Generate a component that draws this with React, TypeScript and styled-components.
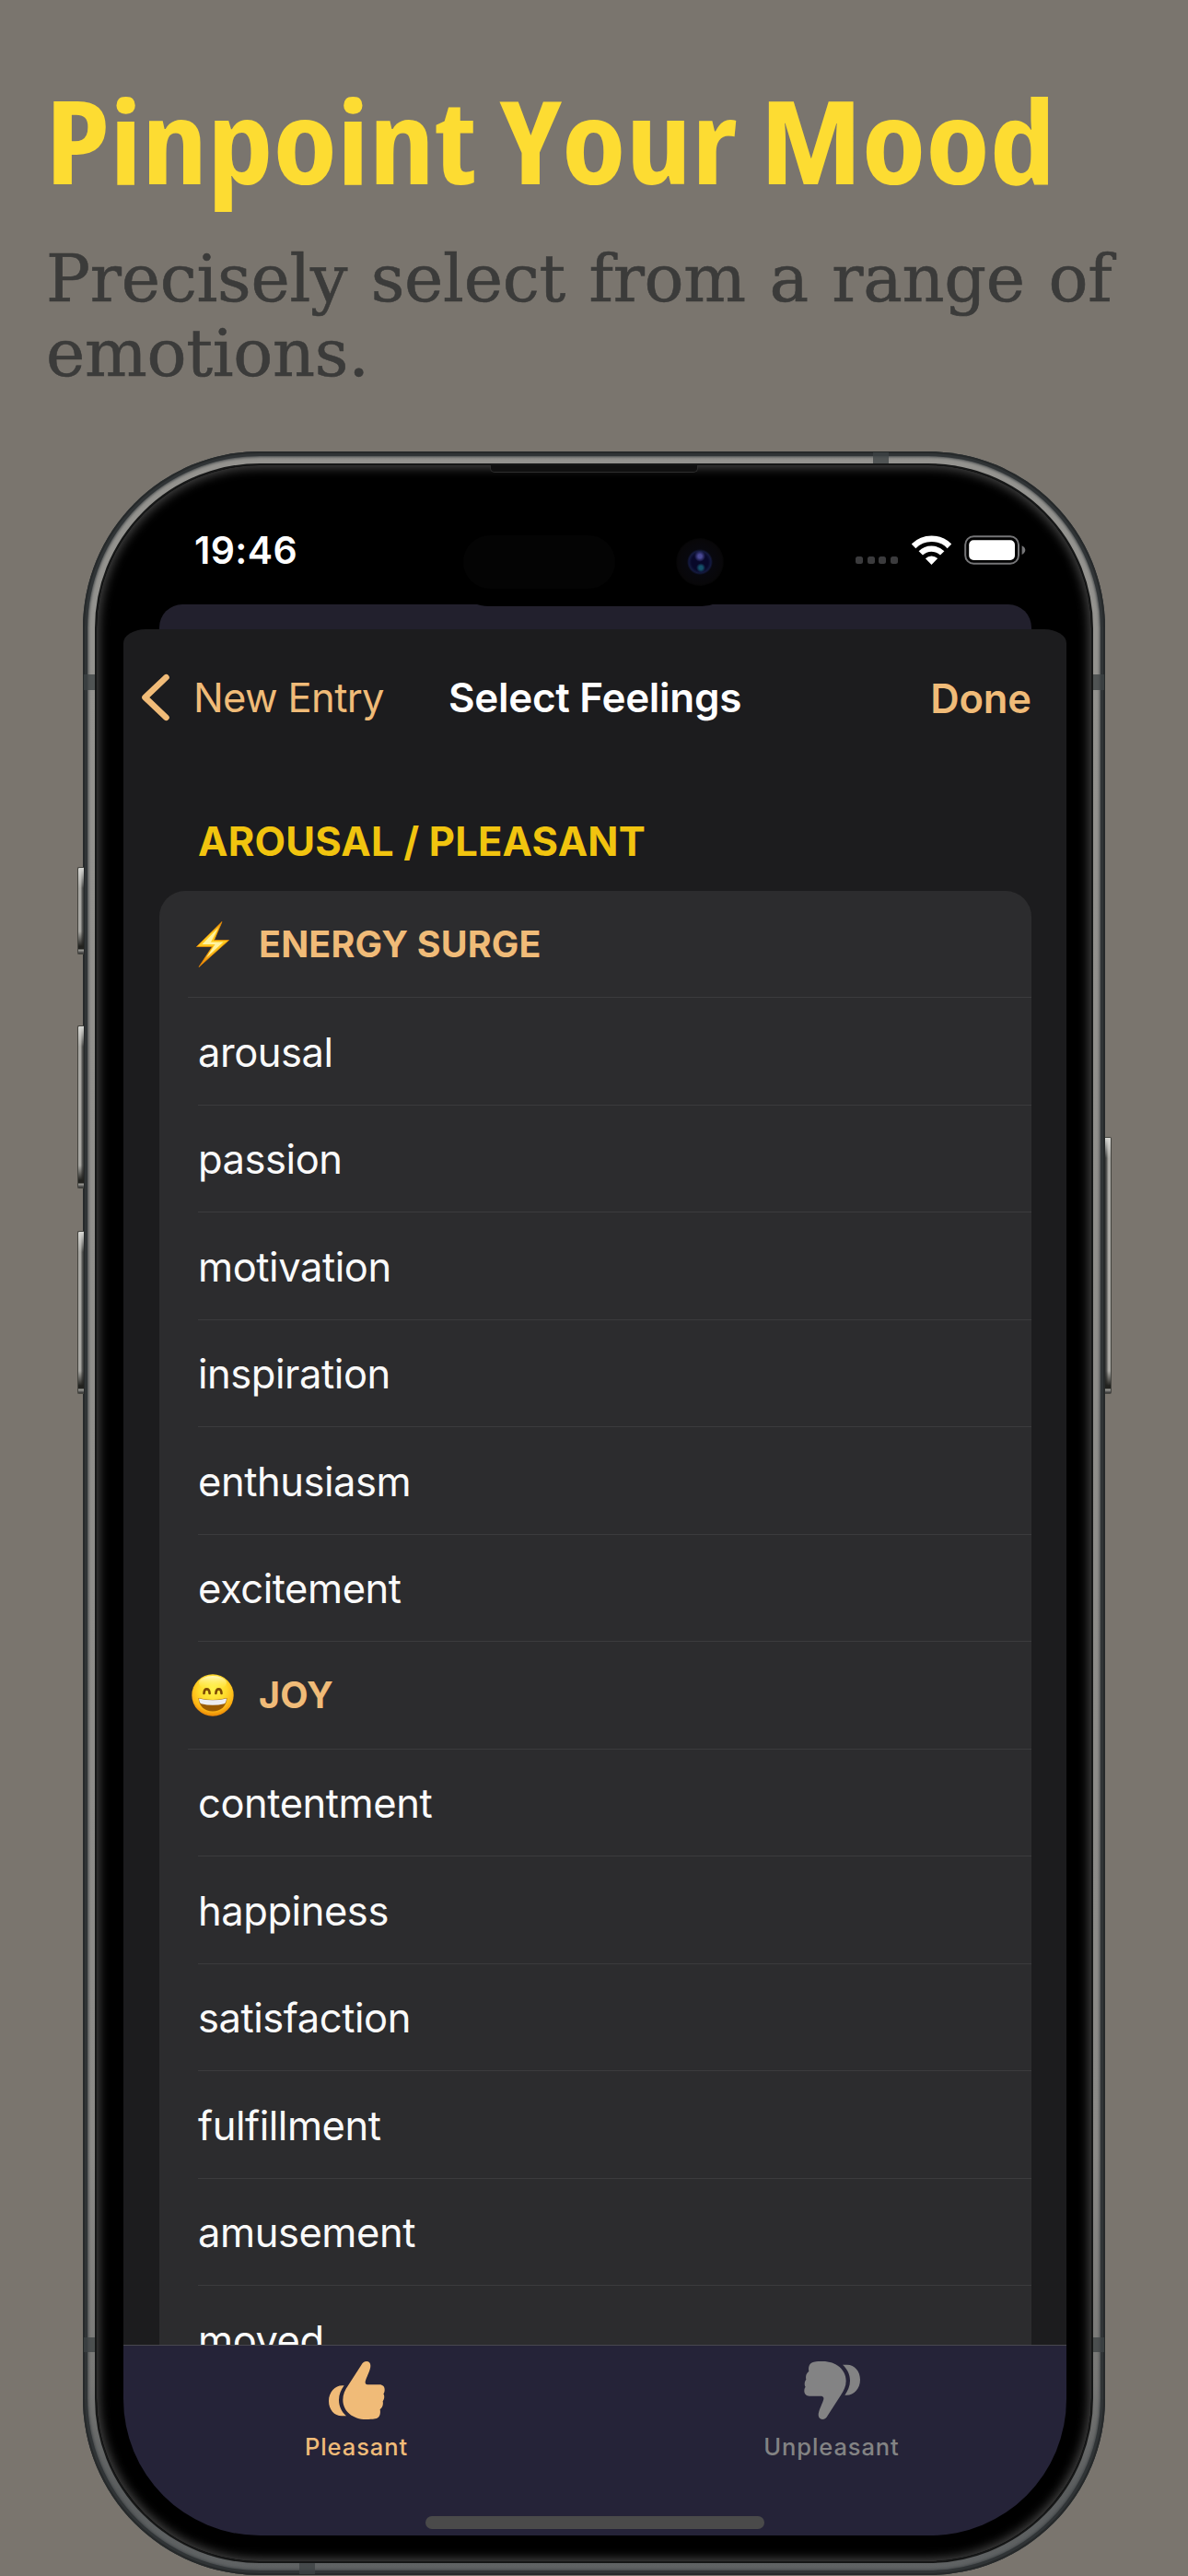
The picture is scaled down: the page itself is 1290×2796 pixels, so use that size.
import React from "react";
import styled, { createGlobalStyle } from "styled-components";

const ACCENT = "#f0bb78";
const UI_FONT = `Inter, "Liberation Sans", sans-serif`;

const GlobalStyle = createGlobalStyle`
  *, *::before, *::after { box-sizing: border-box; }
  body { margin: 0; background: #7a756e; }
`;

const Page = styled.main`
  display: flex;
  flex-direction: column;
  width: 1290px;
  height: 2796px;
  overflow: hidden;
  background: #7a756e;
`;

const Intro = styled.header`
  flex: none;
  height: 490px;
  padding: 86px 50px 0 50px;
`;

const Title = styled.h1`
  margin: 0;
  width: max-content;
  height: 130px;
  color: #fddc32;
  font: 700 126px/130px "Open Sans", "Noto Sans", sans-serif;
  font-stretch: 75%;
  white-space: nowrap;
  transform: scaleX(1.13);
  transform-origin: 5px 50%;
`;

const Subtitle = styled.p`
  margin: 47px 0 0;
  color: #3b3b3a;
  font: 400 71.5px/80.5px "DejaVu Serif", serif;
  letter-spacing: -0.3px;
  word-spacing: 3.2px;
  -webkit-text-stroke: 0.6px #3b3b3a;
`;

/* ---------- device ---------- */

const Device = styled.div`
  position: relative;
  flex: none;
  width: 1110px;
  height: 2305px;
  margin-left: 90px;
  padding: 13px;
  border-radius: 192px;
  background: linear-gradient(180deg, #94938f 0%, #8b8a87 80%, #777775 91%, #5a5d5e 96%, #606364 100%);
  box-shadow:
    inset 0 0 0 2px #26292a,
    inset 0 0 0 5px #303436,
    inset 0 0 3px 6px #424648;
`;

const Face = styled.div`
  height: 100%;
  padding: 28px 27px 28px 29px;
  border: 2px solid #161717;
  border-radius: 179px;
  background: #000;
  box-shadow: inset 0 0 11px 3px #444;
`;

const SideButton = styled.span<{ $side: "left" | "right"; $top: number; $height: number }>`
  position: absolute;
  ${(p) => (p.$side === "left" ? "left: -6px;" : "right: -7px;")}
  top: ${(p) => p.$top}px;
  width: 7px;
  height: ${(p) => p.$height}px;
  border: 1px solid #44443f;
  border-${(p) => (p.$side === "left" ? "right" : "left")}: 0;
  border-radius: ${(p) => (p.$side === "left" ? "2px 0 0 2px" : "0 2px 2px 0")};
  background:
    linear-gradient(180deg, #d8d8d4 0, transparent 22px, transparent calc(100% - 24px), #22221f calc(100% - 8px), #22221f calc(100% - 5px), #a0a09b calc(100% - 4px), #333 100%),
    linear-gradient(${(p) => (p.$side === "left" ? "90deg" : "270deg")}, #a9a8a3 0 40%, #3d3e3d 85%);
`;

const Antenna = styled.span<{ $x: number; $y: number; $w: number; $h: number }>`
  position: absolute;
  left: ${(p) => p.$x}px;
  top: ${(p) => p.$y}px;
  width: ${(p) => p.$w}px;
  height: ${(p) => p.$h}px;
  background: rgba(62, 66, 68, 0.78);
`;

const Earpiece = styled.span`
  position: absolute;
  left: 442px;
  top: 15px;
  width: 226px;
  height: 8px;
  border: 1px solid #2d2d2d;
  border-top: 0;
  border-radius: 0 0 5px 5px;
  background: #101010;
`;

const Screen = styled.div`
  position: relative;
  display: flex;
  flex-direction: column;
  width: 1024px;
  height: 2219px;
  overflow: hidden;
  border-radius: 148px;
  background: #000;
`;

const Island = styled.div`
  position: absolute;
  z-index: 1;
  left: 349px;
  top: 29px;
  width: 326px;
  height: 96px;
  padding: 19px 23px 0 20px;
  display: flex;
  justify-content: space-between;
  border-radius: 48px;
  background: #000;
`;

const Sensor = styled.span`
  width: 165px;
  height: 58px;
  border-radius: 29px;
  background: #040404;
`;

const Lens = styled.span`
  width: 52px;
  height: 52px;
  margin-top: 3px;
  border-radius: 50%;
  background:
    radial-gradient(circle at 50% 38%, #4a4a96 0 2px, transparent 6px),
    radial-gradient(circle at 52% 62%, #14516a 0 2px, transparent 5px),
    radial-gradient(circle at 50% 50%, #08082a 0 9px, #141a3f 12px, #08080e 14px, #080709 24px, #040404 26px);
`;

const StatusBar = styled.div`
  display: flex;
  flex: none;
  align-items: center;
  height: 123px;
  padding: 4px 44px 0 77px;
`;

const Clock = styled.span`
  margin-right: auto;
  color: #fff;
  font: 600 41px/50px ${UI_FONT};
  letter-spacing: 0.4px;
`;

const SignalDots = styled.span`
  display: flex;
  gap: 4.4px;
  margin: 22px 15px 0 0;
`;

const Dot = styled.i`
  width: 8px;
  height: 8px;
  border-radius: 2.5px;
  background: #3b3b3d;
`;

const StatusIcon = styled.svg`
  display: block;
  flex: none;
`;

const WifiIcon = styled(StatusIcon)`
  margin-right: 14.5px;
`;

const BackSheet = styled.div`
  flex: none;
  height: 27px;
  margin: 0 38.5px;
  border-radius: 25px 25px 0 0;
  background: #22202d;
`;

const Sheet = styled.section`
  display: flex;
  flex: 1;
  flex-direction: column;
  min-height: 0;
  border-radius: 24px 24px 0 0 / 15px 15px 0 0;
  background: #1c1c1e;
`;

const NavBar = styled.nav`
  display: grid;
  flex: none;
  grid-template-columns: 300px 1fr 280px;
  align-items: center;
  height: 149px;
  padding: 0 38px 2px 18px;
`;

const BackButton = styled.a`
  display: flex;
  align-items: center;
  gap: 26px;
  color: ${ACCENT};
  font: 400 43.5px/52px ${UI_FONT};
  letter-spacing: -0.65px;
  white-space: nowrap;
`;

const NavTitle = styled.h2`
  margin: 0;
  color: #fff;
  font: 600 44px/52px ${UI_FONT};
  letter-spacing: -0.3px;
  text-align: center;
  white-space: nowrap;
`;

const DoneButton = styled.a`
  padding-top: 2px;
  color: ${ACCENT};
  font: 600 43.5px/52px ${UI_FONT};
  letter-spacing: -0.1px;
  text-align: right;
`;

const SectionTitle = styled.h3`
  display: flex;
  flex: none;
  align-items: center;
  height: 135px;
  margin: 0;
  padding: 27px 0 0 81px;
  color: #f1c40f;
  font: 700 43.5px/52px ${UI_FONT};
  letter-spacing: 0.2px;
`;

const ListCard = styled.div`
  flex: 1;
  min-height: 0;
  margin: 0 38.5px;
  overflow: hidden;
  border-radius: 28px 28px 0 0;
  background: #2c2c2e;
`;

const GroupRow = styled.div`
  height: 116.5px;
  padding-left: 31px;
  &:first-child { height: 116px; }
`;

const GroupLabel = styled.div`
  display: flex;
  align-items: center;
  height: 100%;
  border-bottom: 1px solid #3b3b3d;
  color: ${ACCENT};
  font: 700 39.4px/48px ${UI_FONT};
  letter-spacing: 0.2px;
`;

const EmojiSlot = styled.span`
  display: flex;
  justify-content: center;
  width: 55px;
  margin-right: 22.5px;
`;

const FeelingRow = styled.div`
  height: 116.5px;
  padding-left: 42.5px;
`;

const FeelingLabel = styled.div`
  display: flex;
  align-items: center;
  height: 100%;
  padding-top: 2px;
  border-bottom: 1px solid #3b3b3d;
  color: #fafafa;
  font: 400 43.5px/52px ${UI_FONT};
  letter-spacing: -0.45px;
`;

const TabBar = styled.footer`
  display: flex;
  flex: none;
  flex-direction: column;
  align-items: center;
  height: 207px;
  border-top: 1px solid #48474f;
  background: #252338;
`;

const Tabs = styled.div`
  display: flex;
  flex: none;
  justify-content: center;
  width: 1024px;
  height: 185px;
  padding-right: 2px;
`;

const Tab = styled.a<{ $active?: boolean }>`
  display: flex;
  flex: 0 0 516px;
  flex-direction: column;
  align-items: center;
  padding-top: 17px;
  color: ${(p) => (p.$active ? ACCENT : "#838384")};
  font: 500 25.5px/32px ${UI_FONT};
  letter-spacing: 0.9px;
`;

const TabLabel = styled.span`
  margin-top: 14px;
`;

const ThumbSvg = styled.svg<{ $down?: boolean }>`
  display: block;
  fill: currentColor;
  transform: ${(p) => (p.$down ? "rotate(180deg)" : "none")};
`;

const HomeIndicator = styled.span`
  width: 368px;
  height: 14px;
  border-radius: 7px;
  background: #4a4a4a;
`;

/* ---------- drawings ---------- */

const Wifi = () => (
  <WifiIcon width="43" height="32" viewBox="0 0 43 32" fill="none" stroke="#fff">
    <path d="M2 11.8a27.5 27.5 0 0 1 39 0" strokeWidth="6.6" />
    <path d="M9.8 19.4a16.6 16.6 0 0 1 23.4 0" strokeWidth="6.2" />
    <path d="M21.5 32l-6.6-6.8a9.4 9.4 0 0 1 13.2 0z" fill="#fff" stroke="none" />
  </WifiIcon>
);

const Battery = () => (
  <StatusIcon width="67" height="32" viewBox="0 0 67 32">
    <rect x="1.2" y="1.2" width="57.8" height="29.6" rx="9" fill="none" stroke="#757577" strokeWidth="2" />
    <rect x="5.2" y="5.2" width="49.8" height="21.8" rx="5" fill="#fff" />
    <path d="M62.6 11.2c2.4 1 3.7 2.8 3.7 4.9s-1.3 3.9-3.7 4.9z" fill="#757577" />
  </StatusIcon>
);

const Chevron = () => (
  <svg width="32" height="52" viewBox="0 0 32 52" fill="none">
    <path
      d="M28.5 4.2L5.5 26 28.5 47.8"
      stroke={ACCENT}
      strokeWidth="6.6"
      strokeLinecap="round"
      strokeLinejoin="round"
    />
  </svg>
);

const Thumb = ({ down }: { down?: boolean }) => (
  <ThumbSvg $down={down} width="61" height="63" viewBox="48 39 183 189">
    <path d="M154 51C158 43 164 39 171 39C179 39 184 45 184 53C184 66 174 84 168 101C165 110 168 115 177 115H213C224 115 230 122 230 131C230 137 229 141 226 145C230 150 230 162 224 169C226 178 224 190 215 195C218 211 213 224 199 226C189 228 180 228 170 228C126 228 94 201 94 164C94 147 101 132 111 118Z" />
    <path d="M98 118C72 114 48 137 48 168C48 197 67 218 92 217H105C90 203 81 186 81 165C81 147 88 132 98 118Z" />
  </ThumbSvg>
);

const Bolt = () => (
  <svg width="36" height="50" viewBox="0 0 36 50">
    <defs>
      <linearGradient id="bolt" x1="0" y1="0" x2="0" y2="1">
        <stop offset="0" stopColor="#f59a0c" />
        <stop offset="0.25" stopColor="#ffd021" />
        <stop offset="0.65" stopColor="#ffc31a" />
        <stop offset="1" stopColor="#e87a05" />
      </linearGradient>
    </defs>
    <path
      d="M28 0.5L0.5 27.5H17.5L3 49.5L35.5 20.5H19.5Z"
      fill="url(#bolt)"
      stroke="#e88b08"
      strokeWidth="0.8"
    />
    <path d="M24 7L6.5 25H20.5L11 39.5L29.5 22.5H16Z" fill="#fff3a0" />
  </svg>
);

const Grin = () => (
  <svg width="46" height="46" viewBox="0 0 46 46">
    <defs>
      <radialGradient id="face" cx="0.5" cy="0.36" r="0.64">
        <stop offset="0" stopColor="#fff24a" />
        <stop offset="0.5" stopColor="#ffdc2c" />
        <stop offset="0.82" stopColor="#fdb515" />
        <stop offset="1" stopColor="#e88305" />
      </radialGradient>
      <linearGradient id="shine" x1="0" y1="0" x2="0" y2="1">
        <stop offset="0" stopColor="#fffbd0" stopOpacity="0.9" />
        <stop offset="1" stopColor="#fff24a" stopOpacity="0" />
      </linearGradient>
    </defs>
    <circle cx="23" cy="23" r="22.7" fill="url(#face)" />
    <ellipse cx="23" cy="9.5" rx="15" ry="7.5" fill="url(#shine)" />
    <path
      d="M13.5 21C13.8 14.8 19.2 14.8 19.6 21M26.4 21C26.8 14.8 32.2 14.8 32.5 21"
      fill="none"
      stroke="#7d4a05"
      strokeWidth="2.6"
      strokeLinecap="round"
    />
    <path d="M7.5 26Q23 30 38.5 26C38 35 31.5 40.5 23 40.5S8 35 7.5 26Z" fill="#9a5c04" />
    <path
      d="M8 26.4Q23 30.3 38 26.4C37.8 29.5 37 31.2 35.6 32.2Q23 35.4 10.4 32.2C9 31.2 8.2 29.5 8 26.4Z"
      fill="#eceef2"
    />
  </svg>
);

const groups = [
  {
    label: "ENERGY SURGE",
    icon: <Bolt />,
    feelings: ["arousal", "passion", "motivation", "inspiration", "enthusiasm", "excitement"],
  },
  {
    label: "JOY",
    icon: <Grin />,
    feelings: ["contentment", "happiness", "satisfaction", "fulfillment", "amusement", "moved"],
  },
];

export default function App() {
  return (
    <Page>
      <GlobalStyle />
      <Intro>
        <Title>Pinpoint Your Mood</Title>
        <Subtitle>Precisely select from a range of emotions.</Subtitle>
      </Intro>
      <Device>
        <SideButton $side="left" $top={451} $height={95} />
        <SideButton $side="left" $top={623} $height={177} />
        <SideButton $side="left" $top={846} $height={177} />
        <SideButton $side="right" $top={744} $height={279} />
        <Face>
          <Screen>
            <StatusBar>
              <Clock>19:46</Clock>
              <SignalDots>
                <Dot />
                <Dot />
                <Dot />
                <Dot />
              </SignalDots>
              <Wifi />
              <Battery />
            </StatusBar>
            <Island>
              <Sensor />
              <Lens />
            </Island>
            <BackSheet />
            <Sheet>
              <NavBar>
                <BackButton>
                  <Chevron />
                  New Entry
                </BackButton>
                <NavTitle>Select Feelings</NavTitle>
                <DoneButton>Done</DoneButton>
              </NavBar>
              <SectionTitle>AROUSAL / PLEASANT</SectionTitle>
              <ListCard>
                {groups.map((group) => (
                  <React.Fragment key={group.label}>
                    <GroupRow>
                      <GroupLabel>
                        <EmojiSlot>{group.icon}</EmojiSlot>
                        {group.label}
                      </GroupLabel>
                    </GroupRow>
                    {group.feelings.map((feeling) => (
                      <FeelingRow key={feeling}>
                        <FeelingLabel>{feeling}</FeelingLabel>
                      </FeelingRow>
                    ))}
                  </React.Fragment>
                ))}
              </ListCard>
            </Sheet>
            <TabBar>
              <Tabs>
                <Tab $active>
                  <Thumb />
                  <TabLabel>Pleasant</TabLabel>
                </Tab>
                <Tab>
                  <Thumb down />
                  <TabLabel>Unpleasant</TabLabel>
                </Tab>
              </Tabs>
              <HomeIndicator />
            </TabBar>
          </Screen>
        </Face>
        <Earpiece />
        <Antenna $x={1} $y={242} $w={12} $h={17} />
        <Antenna $x={1097} $y={242} $w={12} $h={17} />
        <Antenna $x={1} $y={2047} $w={12} $h={16} />
        <Antenna $x={1097} $y={2047} $w={12} $h={16} />
        <Antenna $x={858} $y={1} $w={17} $h={12} />
        <Antenna $x={235} $y={2292} $w={17} $h={12} />
      </Device>
    </Page>
  );
}
